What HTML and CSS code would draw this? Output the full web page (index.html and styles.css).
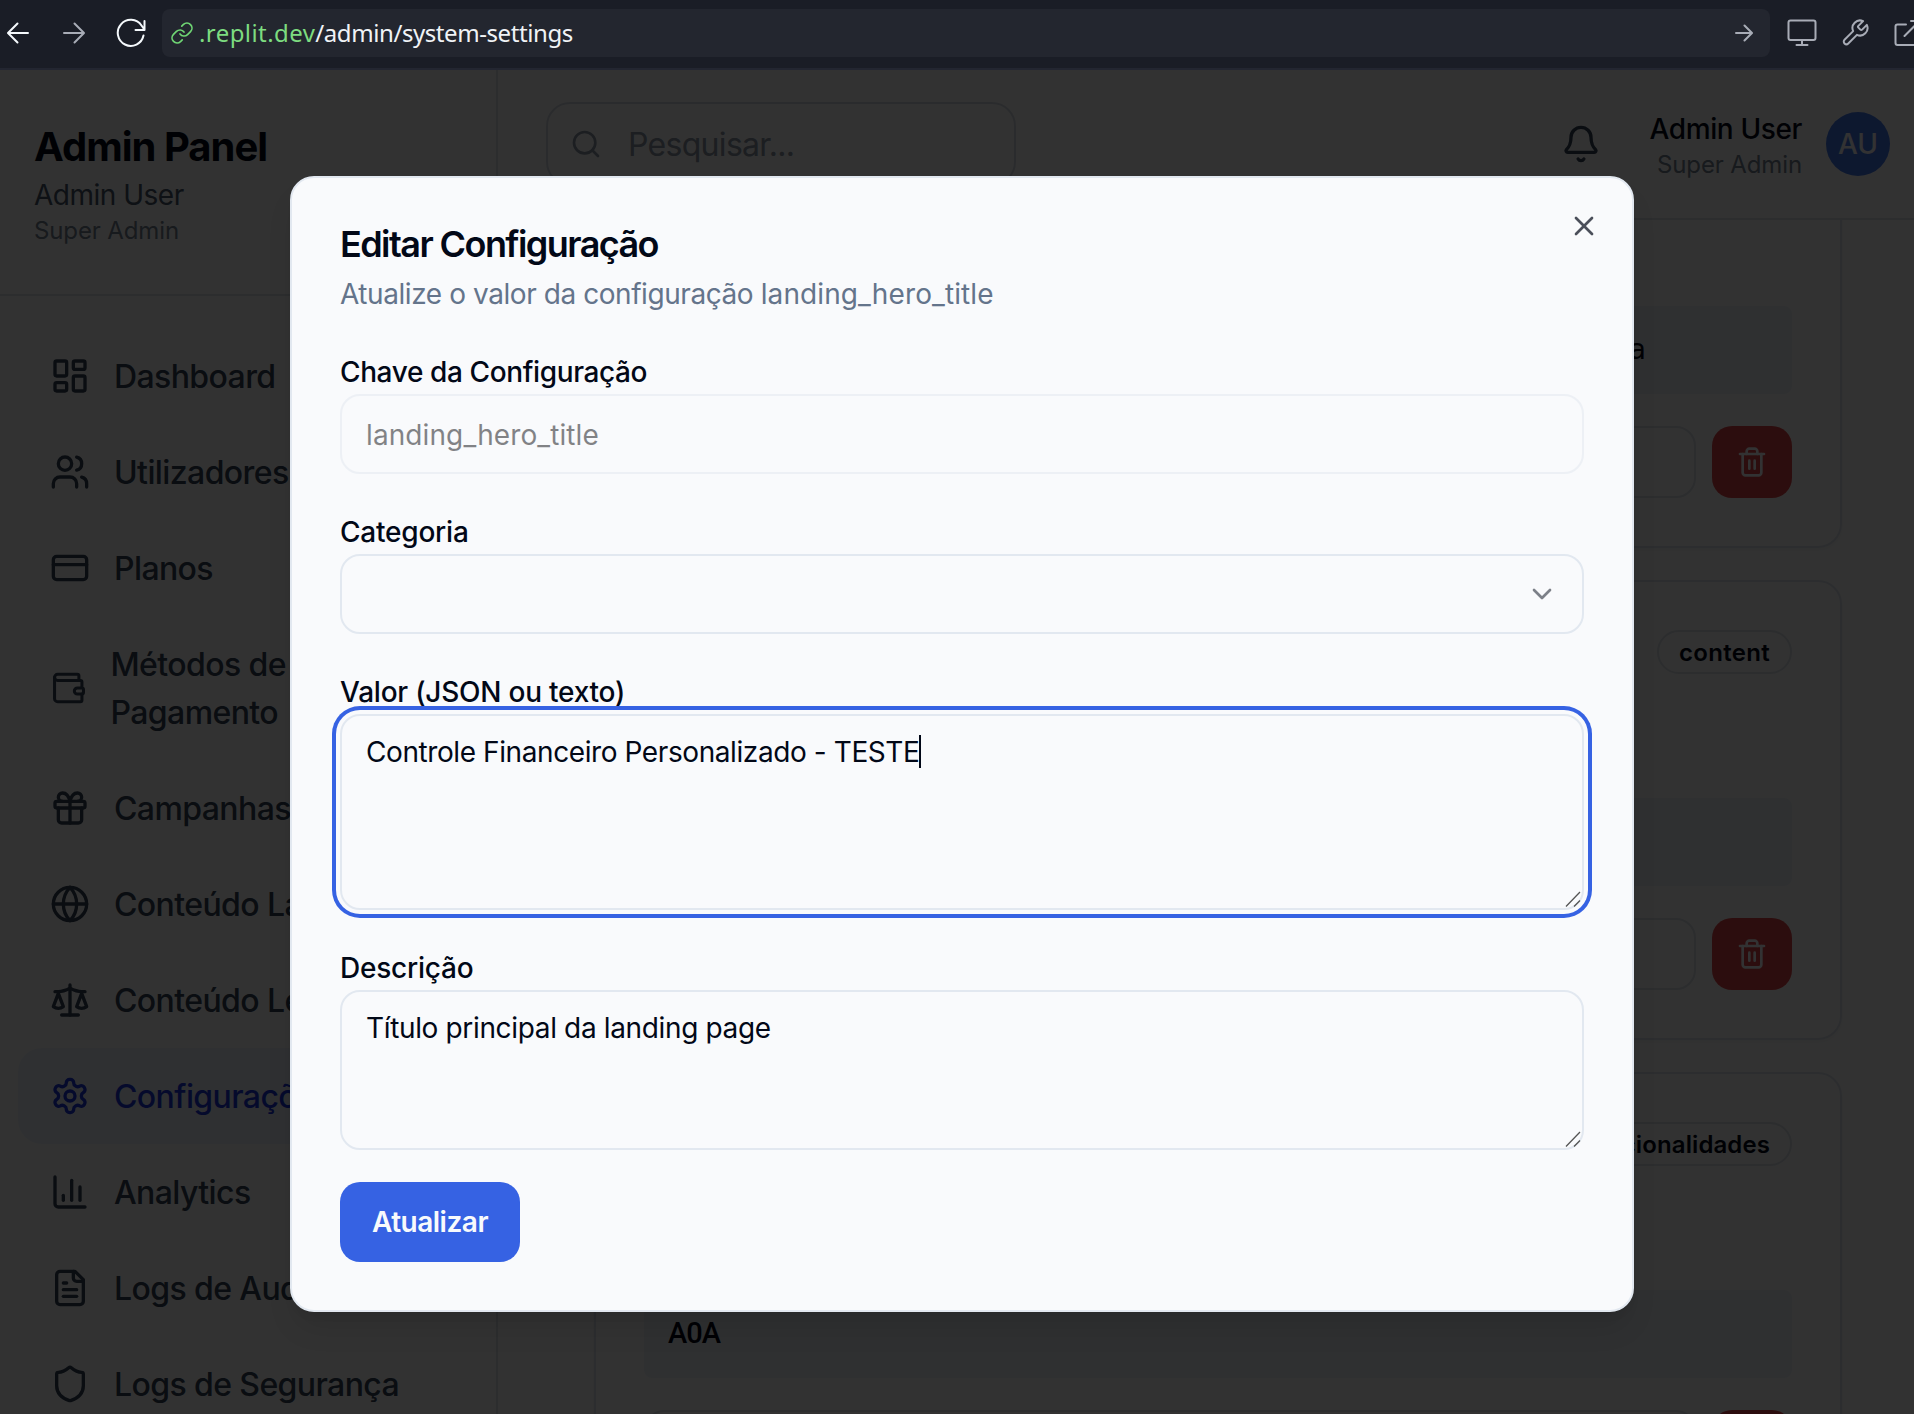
FILE: index.html
```html
<!DOCTYPE html>
<html lang="pt">
<head>
<meta charset="utf-8">
<title>Admin Panel</title>
<link rel="stylesheet" href="styles.css">
</head>
<body>
<header class="browser-bar">
  <div class="browser-nav">
    <svg class="bi back" viewBox="0 0 24 24"><path d="M22 12H2.500M11.500 2.500 2 12l9.500 9.500"/></svg>
    <svg class="bi forward" viewBox="0 0 24 24"><path d="M2 12h19.500M12.500 2.500 22 12l-9.500 9.500"/></svg>
    <svg class="bi reload" viewBox="0 0 30 30"><path d="M27.500 17.500A13 13 0 1 1 25.500 7.500L28 11M28.500 3v9h-9"/></svg>
  </div>
  <div class="address">
    <svg class="bi link" viewBox="0 0 24 24"><path d="M10 13a5 5 0 0 0 7.540.540l3-3a5 5 0 0 0-7.070-7.070l-1.720 1.710"/><path d="M14 11a5 5 0 0 0-7.540-.540l-3 3a5 5 0 0 0 7.070 7.070l1.710-1.710"/></svg>
    <span class="url"><span class="host">.replit.dev</span>/admin/system-settings</span>
    <svg class="bi go" viewBox="0 0 18 18"><path d="M1 9h15.500M9.500 1.500 17 9l-7.500 7.500"/></svg>
  </div>
  <div class="browser-tools">
    <svg class="bi" viewBox="0 0 30 30"><rect x="1.500" y="2.500" width="27" height="19.500" rx="2"/><path d="M15 22v5M9.500 27h11"/></svg>
    <svg class="bi wrench" viewBox="0 0 24 24"><path d="M14.700 6.300a1 1 0 0 0 0 1.400l1.600 1.600a1 1 0 0 0 1.400 0l3.770-3.770a6 6 0 0 1-7.940 7.940l-6.910 6.910a2.120 2.120 0 0 1-3-3l6.910-6.910a6 6 0 0 1 7.940-7.940l-3.760 3.760z"/></svg>
    <svg class="bi" viewBox="0 0 30 30"><path d="M13 6.500H4.500a2 2 0 0 0-2 2V25a2 2 0 0 0 2 2H21a2 2 0 0 0 2-2v-9M11.500 18 26 3.500M18 3h9v9"/></svg>
  </div>
</header>

<div class="viewport">
  <div class="app">
    <aside class="sidebar">
      <div class="brand">
        <h1>Admin Panel</h1>
        <p class="name">Admin User</p>
        <p class="role">Super Admin</p>
      </div>
      <nav>
        <a><svg class="icon" viewBox="0 0 24 24"><rect width="7" height="9" x="3" y="3" rx="1"/><rect width="7" height="5" x="14" y="3" rx="1"/><rect width="7" height="9" x="14" y="12" rx="1"/><rect width="7" height="5" x="3" y="16" rx="1"/></svg><span>Dashboard</span></a>
        <a><svg class="icon" viewBox="0 0 24 24"><path d="M16 21v-2a4 4 0 0 0-4-4H6a4 4 0 0 0-4 4v2"/><circle cx="9" cy="7" r="4"/><path d="M22 21v-2a4 4 0 0 0-3-3.870"/><path d="M16 3.130a4 4 0 0 1 0 7.750"/></svg><span>Utilizadores</span></a>
        <a><svg class="icon" viewBox="0 0 24 24"><rect width="20" height="14" x="2" y="5" rx="2"/><path d="M2 10h20"/></svg><span>Planos</span></a>
        <a><svg class="icon narrow" viewBox="0 0 24 24"><path d="M19 7V4a1 1 0 0 0-1-1H5a2 2 0 0 0 0 4h15a1 1 0 0 1 1 1v4h-3a2 2 0 0 0 0 4h3a1 1 0 0 0 1-1v-2a1 1 0 0 0-1-1"/><path d="M3 5v14a2 2 0 0 0 2 2h15a1 1 0 0 0 1-1v-4"/></svg><span>Métodos de<br>Pagamento</span></a>
        <a><svg class="icon" viewBox="0 0 24 24"><rect x="3" y="8" width="18" height="4" rx="1"/><path d="M12 8v13"/><path d="M19 12v7a2 2 0 0 1-2 2H7a2 2 0 0 1-2-2v-7"/><path d="M7.500 8a2.500 2.500 0 0 1 0-5A4.800 8 0 0 1 12 8a4.800 8 0 0 1 4.500-5 2.500 2.500 0 0 1 0 5"/></svg><span>Campanhas</span></a>
        <a><svg class="icon" viewBox="0 0 24 24"><circle cx="12" cy="12" r="10"/><path d="M12 2a14.500 14.500 0 0 0 0 20 14.500 14.500 0 0 0 0-20"/><path d="M2 12h20"/></svg><span>Conteúdo Landing</span></a>
        <a><svg class="icon" viewBox="0 0 24 24"><path d="m16 16 3-8 3 8c-.870.650-1.920 1-3 1s-2.130-.350-3-1Z"/><path d="m2 16 3-8 3 8c-.870.650-1.920 1-3 1s-2.130-.350-3-1Z"/><path d="M7 21h10"/><path d="M12 3v18"/><path d="M3 7h2c2 0 5-1 7-2 2 1 5 2 7 2h2"/></svg><span>Conteúdo Legal</span></a>
        <a class="active"><svg class="icon" viewBox="0 0 24 24"><path d="M12.220 2h-.440a2 2 0 0 0-2 2v.180a2 2 0 0 1-1 1.730l-.430.250a2 2 0 0 1-2 0l-.150-.080a2 2 0 0 0-2.730.730l-.220.380a2 2 0 0 0 .730 2.730l.150.100a2 2 0 0 1 1 1.720v.510a2 2 0 0 1-1 1.740l-.150.090a2 2 0 0 0-.730 2.730l.220.380a2 2 0 0 0 2.730.730l.150-.080a2 2 0 0 1 2 0l.430.250a2 2 0 0 1 1 1.730V20a2 2 0 0 0 2 2h.440a2 2 0 0 0 2-2v-.180a2 2 0 0 1 1-1.730l.430-.250a2 2 0 0 1 2 0l.150.080a2 2 0 0 0 2.730-.730l.220-.390a2 2 0 0 0-.730-2.730l-.150-.080a2 2 0 0 1-1-1.740v-.500a2 2 0 0 1 1-1.740l.150-.090a2 2 0 0 0 .730-2.730l-.220-.380a2 2 0 0 0-2.730-.730l-.150.080a2 2 0 0 1-2 0l-.430-.250a2 2 0 0 1-1-1.730V4a2 2 0 0 0-2-2z"/><circle cx="12" cy="12" r="3"/></svg><span>Configurações</span></a>
        <a><svg class="icon" viewBox="0 0 24 24"><path d="M3 3v16a2 2 0 0 0 2 2h16"/><path d="M18 17V9"/><path d="M13 17V5"/><path d="M8 17v-3"/></svg><span>Analytics</span></a>
        <a><svg class="icon" viewBox="0 0 24 24"><path d="M15 2H6a2 2 0 0 0-2 2v16a2 2 0 0 0 2 2h12a2 2 0 0 0 2-2V7Z"/><path d="M14 2v4a2 2 0 0 0 2 2h4"/><path d="M10 9H8"/><path d="M16 13H8"/><path d="M16 17H8"/></svg><span>Logs de Auditoria</span></a>
        <a><svg class="icon" viewBox="0 0 24 24"><path d="M20 13c0 5-3.500 7.500-7.660 8.950a1 1 0 0 1-.670-.010C7.500 20.500 4 18 4 13V6a1 1 0 0 1 1-1c2 0 4.500-1.200 6.240-2.720a1.170 1.170 0 0 1 1.520 0C14.510 3.810 17 5 19 5a1 1 0 0 1 1 1z"/></svg><span>Logs de Segurança</span></a>
      </nav>
    </aside>

    <div class="content">
      <div class="topbar">
        <div class="search">
          <svg class="icon sm" viewBox="0 0 24 24"><circle cx="11" cy="11" r="8"/><path d="m21 21-4.300-4.300"/></svg>
          <span>Pesquisar...</span>
        </div>
        <svg class="icon bell" viewBox="0 0 24 24"><path d="M10.268 21a2 2 0 0 0 3.464 0"/><path d="M3.262 15.326A1 1 0 0 0 4 17h16a1 1 0 0 0 .740-1.673C19.410 13.956 18 12.499 18 8A6 6 0 0 0 6 8c0 4.499-1.411 5.956-2.738 7.326"/></svg>
        <div class="user">
          <p class="user-name">Admin User</p>
          <p class="role">Super Admin</p>
        </div>
        <div class="avatar">AU</div>
      </div>
      <main>
        <section class="card">
          <div class="value tail">a</div>
          <div class="actions"><div class="edit"></div><div class="delete"><svg class="icon sm" viewBox="0 0 24 24"><path d="M3 6h18"/><path d="M19 6v14c0 1-1 2-2 2H7c-1 0-2-1-2-2V6"/><path d="M8 6V4c0-1 1-2 2-2h4c1 0 2 1 2 2v2"/><path d="M10 11v6M14 11v6"/></svg></div></div>
        </section>
        <section class="card">
          <span class="badge">content</span>
          <div class="value"></div>
          <div class="actions"><div class="edit"></div><div class="delete"><svg class="icon sm" viewBox="0 0 24 24"><path d="M3 6h18"/><path d="M19 6v14c0 1-1 2-2 2H7c-1 0-2-1-2-2V6"/><path d="M8 6V4c0-1 1-2 2-2h4c1 0 2 1 2 2v2"/><path d="M10 11v6M14 11v6"/></svg></div></div>
        </section>
        <section class="card">
          <span class="badge long">funcionalidades</span>
          <div class="value">A0A</div>
          <div class="actions"><div class="edit"></div><div class="delete"></div></div>
        </section>
      </main>
    </div>
  </div>

  <div class="overlay">
    <div class="dialog">
      <svg class="icon sm close" viewBox="0 0 24 24"><path d="M18 6 6 18"/><path d="m6 6 12 12"/></svg>
      <div class="dialog-head">
        <h2>Editar Configuração</h2>
        <p>Atualize o valor da configuração <span class="key">landing_hero_title</span></p>
      </div>
      <div class="field">
        <div class="label wide"><span>Chave da Configuração</span></div>
        <div class="control disabled">landing_hero_title</div>
      </div>
      <div class="field">
        <div class="label"><span>Categoria</span></div>
        <div class="control select"><svg class="icon sm" viewBox="0 0 24 24"><path d="m6 9 6 6 6-6"/></svg></div>
      </div>
      <div class="field">
        <div class="label"><span>Valor (JSON ou texto)</span></div>
        <div class="control area tall focused"><span class="typed">Controle Financeiro Personalizado - TESTE</span><i class="caret"></i><svg class="grip" viewBox="0 0 16 16"><path d="M1 15.500 15 1M9 15.500l6-6"/></svg></div>
      </div>
      <div class="field">
        <div class="label"><span>Descrição</span></div>
        <div class="control area"><span>Título principal da landing page</span><svg class="grip" viewBox="0 0 16 16"><path d="M1 15.500 15 1M9 15.500l6-6"/></svg></div>
      </div>
      <div class="submit">Atualizar</div>
    </div>
  </div>
</div>
</body>
</html>
```
FILE: styles.css
```css
* { box-sizing: border-box; margin: 0; padding: 0; }

body {
  width: 1914px;
  height: 1414px;
  overflow: hidden;
  display: flex;
  flex-direction: column;
  font-family: Inter, "Liberation Sans", sans-serif;
  font-size: 32px;
  line-height: 48px;
  color: #020817;
  background: #fafbfb;
}

/* Browser toolbar */
.browser-bar {
  flex: none;
  height: 70px;
  display: flex;
  align-items: center;
  padding: 0 0 2px 6px;
  background: #1a1d26;
  border-bottom: 2px solid #232631;
  overflow: hidden;
}
.bi { flex: none; width: 30px; height: 30px; fill: none; stroke: #a8acb6; stroke-width: 2; stroke-linecap: round; stroke-linejoin: round; }
.browser-nav { flex: none; width: 156px; display: flex; align-items: center; }
.bi.back { width: 24px; height: 24px; stroke: #f5f9fc; }
.bi.forward { width: 24px; height: 24px; margin-left: 32px; }
.bi.reload { margin-left: 30px; stroke: #f5f9fc; }
.address {
  flex: none;
  width: 1608px;
  height: 48px;
  display: flex;
  align-items: center;
  padding: 0 17px 0 8px;
  border-radius: 8px;
  background: #23262f;
}
.bi.link { width: 24px; height: 24px; stroke: #6fd574; stroke-width: 1.700; }
.url {
  margin-left: 5px;
  font-family: "Noto Sans", sans-serif;
  font-size: 24px;
  line-height: 48px;
  letter-spacing: -.42px;
  white-space: nowrap;
  color: #f0f3f6;
}
.host { color: #7ddc80; letter-spacing: .42px; }
.bi.go { width: 18px; height: 18px; margin-left: auto; }
.browser-tools { flex: none; display: flex; align-items: center; gap: 23px; margin-left: 17px; }
.bi.wrench { stroke-width: 1.600; }

/* Application behind the dialog */
.viewport { flex: 1; position: relative; overflow: hidden; }
.app { display: flex; width: 1952px; height: 1348px; margin-left: -14px; }
.icon { flex: none; width: 40px; height: 40px; fill: none; stroke: currentColor; stroke-width: 2; stroke-linecap: round; stroke-linejoin: round; }
.icon.sm { width: 32px; height: 32px; }

.sidebar { flex: none; width: 512px; border-right: 2px solid #d9dee6; }
.brand { padding: 49px 48px 47px; border-bottom: 2px solid #d9dee6; }
.brand h1 { font-size: 40px; line-height: 56px; font-weight: 700; letter-spacing: -1px; }
.name { font-size: 28px; line-height: 40px; letter-spacing: -.5px; color: #475569; }
.role { font-size: 24px; line-height: 32px; letter-spacing: -.12px; color: #75808f; }
nav { padding: 32px; }
nav a { display: flex; align-items: center; gap: 24px; padding: 24px 32px; border-radius: 24px; font-weight: 500; letter-spacing: -.6px; color: #334155; white-space: nowrap; }
nav a span { padding-top: 1px; margin-bottom: -1px; line-height: 48px; }
nav a.active { background: #ebf1f7; color: #1a36dc; }
.icon.narrow { width: 36.500px; }

.content { flex: 1; display: flex; flex-direction: column; overflow: hidden; }
.topbar { flex: none; height: 150px; display: flex; align-items: center; padding: 0 48px; border-bottom: 2px solid #d9dee6; }
.search { width: 470px; height: 84px; display: flex; align-items: center; gap: 26px; padding-left: 22px; border: 2px solid #d3d8e0; border-radius: 24px; color: #8a94a3; letter-spacing: -.7px; }
.search span { padding-top: 2px; }
.bell { margin-left: auto; color: #334155; }
.user { margin: 1px 24px 0 48px; text-align: right; }
.user-name { font-size: 28px; line-height: 40px; font-weight: 500; letter-spacing: -.37px; }
.avatar { width: 64px; height: 64px; border-radius: 50%; background: #4477e8; color: #f8fafc; font-size: 28px; line-height: 64px; font-weight: 500; text-align: center; }

main { flex: 1; overflow: hidden; padding: 0 96px; display: flex; flex-direction: column; gap: 32px; }
.card { flex: none; height: 460px; display: flex; flex-direction: column; padding: 48px; border: 2px solid #dce1e9; border-radius: 24px; box-shadow: 0 2px 4px rgba(0, 0, 0, .05); }
.card:first-child { margin-top: -132px; }
.badge { align-self: flex-end; padding: 5px 20px 3px; border: 2px solid #d9dee6; border-radius: 22px; font-size: 24px; line-height: 32px; font-weight: 600; letter-spacing: .3px; }
.badge.long { letter-spacing: .1px; }
.value { height: 88px; margin-top: auto; padding: 23px 24px; border-radius: 8px; background: #ebf0f5; font-family: Roboto, sans-serif; font-size: 29px; line-height: 40px; font-weight: 500; letter-spacing: -1px; }
.value.tail { padding-left: 985px; padding-top: 24px; font-family: "DejaVu Sans Mono", monospace; font-size: 28px; font-weight: 400; letter-spacing: 0; }
.actions { display: flex; gap: 16px; margin-top: 32px; }
.edit { flex: 1; height: 72px; border: 2px solid #d9dee6; border-radius: 20px; }
.delete { width: 80px; height: 72px; display: flex; align-items: center; justify-content: center; border-radius: 20px; background: #dc4446; color: #f8fafc; }

/* Dialog */
.overlay {
  position: absolute;
  top: 0;
  left: -14px;
  width: 1952px;
  height: 1348px;
  display: flex;
  align-items: center;
  justify-content: center;
  background: rgba(0, 0, 0, .8);
}
.dialog {
  position: relative;
  width: 1344px;
  display: flex;
  flex-direction: column;
  gap: 32px;
  padding: 48px;
  border: 2px solid #e2e8f0;
  border-radius: 24px;
  background: #f9fafc;
  box-shadow: 0 20px 30px -6px rgba(0, 0, 0, .1), 0 8px 12px -8px rgba(0, 0, 0, .1);
}
.close { position: absolute; top: 32px; right: 32px; opacity: .7; }
.dialog-head h2 { font-size: 36px; line-height: 36px; font-weight: 600; letter-spacing: -1.57px; margin-bottom: 12px; }
.dialog-head p { font-size: 28px; line-height: 40px; letter-spacing: -.43px; color: #64748b; }
.key { letter-spacing: .1px; }
.label { height: 48px; padding-top: 1px; }
.label span { font-size: 28px; font-weight: 500; line-height: 28px; letter-spacing: -.22px; }
.label.wide span { letter-spacing: -.38px; }
.control { position: relative; height: 80px; padding: 19px 24px 17px; border: 2px solid #e2e8f0; border-radius: 20px; background: #f9fafc; font-size: 28px; line-height: 40px; }
.control.disabled { opacity: .5; color: #0c0c10; letter-spacing: .1px; }
.select { display: flex; align-items: center; justify-content: flex-end; padding: 18px 24px; }
.select .icon { opacity: .5; }
.area { height: 160px; padding: 16px 24px; display: flex; align-items: flex-start; letter-spacing: -.35px; }
.tall { height: 196px; letter-spacing: -.41px; }
.focused { box-shadow: 0 0 0 4px #f9fafc, 0 0 0 8px #3662e3; }
.caret { width: 2px; height: 33px; margin-top: 3px; background: #020817; }
.grip { position: absolute; right: 1px; bottom: 1px; width: 16px; height: 16px; fill: none; stroke: #555; stroke-width: 1.300; }
.submit { align-self: flex-start; width: 180px; height: 80px; border-radius: 20px; background: #3662e3; color: #f8fafc; font-size: 28px; font-weight: 600; letter-spacing: -.5px; line-height: 80px; text-align: center; }
```
